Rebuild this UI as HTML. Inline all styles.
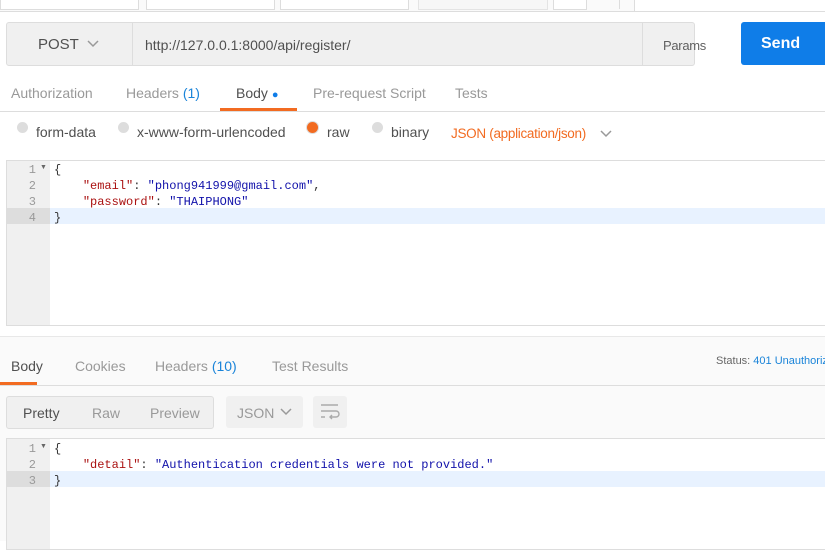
<!DOCTYPE html><html><head><style>
body{margin:0;width:825px;height:540px;overflow:hidden;background:#fff;font-family:"Liberation Sans",sans-serif;position:relative;color:#505050}
.a{position:absolute;white-space:nowrap}
.mono{font-family:"Liberation Mono",monospace;font-size:12px}
.tab{position:absolute;font-size:14px;color:#999;white-space:nowrap}
</style></head><body>
<div class="a" style="left:0;top:0;width:825px;height:11px;border-bottom:1px solid #ddd;background:#fafafa"></div>
<div class="a" style="left:0;top:0;width:137px;height:9px;border:1px solid #ddd;border-top:0;background:#fff"></div>
<div class="a" style="left:146px;top:0;width:127px;height:9px;border:1px solid #ddd;border-top:0;background:#fff"></div>
<div class="a" style="left:280px;top:0;width:127px;height:9px;border:1px solid #ddd;border-top:0;background:#fff"></div>
<div class="a" style="left:418px;top:0;width:128px;height:9px;border:1px solid #e4e4e4;border-top:0;background:#f7f7f7"></div>
<div class="a" style="left:553px;top:0;width:32px;height:9px;border:1px solid #ddd;border-top:0;background:#fff"></div>
<div class="a" style="left:589px;top:0;width:30px;height:9px;border-right:1px solid #ddd"></div>
<div class="a" style="left:634px;top:0;width:191px;height:11px;border-left:1px solid #ddd;background:#fff"></div>

<div class="a" style="left:6px;top:22px;width:687px;height:42px;border:1px solid #ddd;border-radius:3px;background:#f0f0f0"></div>
<div class="a" style="left:132px;top:23px;width:1px;height:42px;background:#ddd"></div>
<div class="a" style="left:642px;top:23px;width:1px;height:42px;background:#ddd"></div>
<div class="a" style="left:38px;top:36px;font-size:15px;color:#505050">POST</div>
<svg class="a" style="left:86px;top:39px" width="14" height="10"><path d="M2 2l5 5 5-5" stroke="#999" stroke-width="1.5" fill="none"/></svg>
<div class="a" style="left:145px;top:37px;font-size:14px;color:#505050">http://127.0.0.1:8000/api/register/</div>
<div class="a" style="left:663px;top:38px;font-size:13px;color:#606060;letter-spacing:-0.3px">Params</div>
<div class="a" style="left:741px;top:22px;width:90px;height:43px;background:#0f7de8;border-radius:3px"></div>
<div class="a" style="left:761px;top:35px;font-size:16px;color:#fff;font-weight:bold">Send</div>

<div class="tab" style="left:11px;top:85px">Authorization</div>
<div class="tab" style="left:126px;top:85px">Headers <span style="color:#1a84d9">(1)</span></div>
<div class="tab" style="left:236px;top:85px;color:#505050">Body <span style="color:#0f7de8;font-size:11px">●</span></div>
<div class="tab" style="left:313px;top:85px">Pre-request Script</div>
<div class="tab" style="left:455px;top:85px">Tests</div>
<div class="a" style="left:0;top:111px;width:825px;height:1px;background:#ddd"></div>
<div class="a" style="left:220px;top:108px;width:77px;height:3px;background:#f26b21"></div>

<div class="a" style="left:17px;top:122px;width:11px;height:11px;border-radius:50%;background:#ddd"></div>
<div class="tab" style="left:36px;top:124px;color:#505050">form-data</div>
<div class="a" style="left:118px;top:122px;width:11px;height:11px;border-radius:50%;background:#ddd"></div>
<div class="tab" style="left:137px;top:124px;color:#505050">x-www-form-urlencoded</div>
<div class="a" style="left:307px;top:122px;width:11px;height:11px;border-radius:50%;background:#f26b21;box-shadow:0 0 0 1px #ddd"></div>
<div class="tab" style="left:327px;top:124px;color:#505050">raw</div>
<div class="a" style="left:372px;top:122px;width:11px;height:11px;border-radius:50%;background:#ddd"></div>
<div class="tab" style="left:391px;top:124px;color:#505050">binary</div>
<div class="tab" style="left:451px;top:126px;color:#f26b21;font-size:13.5px;letter-spacing:-0.3px">JSON (application/json)</div>
<svg class="a" style="left:599px;top:129px" width="14" height="10"><path d="M2 2l5 5 5-5" stroke="#999" stroke-width="1.5" fill="none"/></svg>

<div class="a" style="left:6px;top:160px;width:825px;height:164px;border:1px solid #ddd;background:#fff"></div>
<div class="a" style="left:7px;top:161px;width:43px;height:164px;background:#f0f0f0"></div>
<div class="a" style="left:50px;top:208px;width:775px;height:16px;background:#e8f2ff"></div>
<div class="a" style="left:7px;top:208px;width:43px;height:16px;background:#ddd"></div>
<div class="a mono" style="left:0;top:162px;width:36px;text-align:right;line-height:16px;color:#999">1<br>2<br>3<br>4</div>
<div class="a" style="left:40px;top:164px;font-size:7px;color:#666">▼</div>
<div class="a mono" style="left:54px;top:162px;line-height:16px;color:#333;white-space:pre">{
    <span style="color:#a11">"email"</span>: <span style="color:#11a">"phong941999@gmail.com"</span>,
    <span style="color:#a11">"password"</span>: <span style="color:#11a">"THAIPHONG"</span>
}</div>

<div class="a" style="left:0;top:336px;width:825px;height:204px;background:#fafafa;border-top:1px solid #e8e8e8"></div>
<div class="tab" style="left:11px;top:358px;color:#505050">Body</div>
<div class="tab" style="left:75px;top:358px">Cookies</div>
<div class="tab" style="left:155px;top:358px">Headers <span style="color:#1a84d9">(10)</span></div>
<div class="tab" style="left:272px;top:358px">Test Results</div>
<div class="a" style="left:716px;top:355px;font-size:11px;color:#666">Status: <span style="color:#1a84d9">401 Unauthorized</span></div>
<div class="a" style="left:0;top:385px;width:825px;height:1px;background:#ddd"></div>
<div class="a" style="left:0;top:382px;width:37px;height:3px;background:#f26b21"></div>

<div class="a" style="left:6px;top:396px;width:206px;height:31px;border:1px solid #ddd;border-radius:3px;background:#f0f0f0"></div>
<div class="tab" style="left:23px;top:405px;color:#505050">Pretty</div>
<div class="tab" style="left:92px;top:405px">Raw</div>
<div class="tab" style="left:150px;top:405px">Preview</div>
<div class="a" style="left:226px;top:396px;width:77px;height:32px;border-radius:3px;background:#f0f0f0"></div>
<div class="tab" style="left:237px;top:405px">JSON</div>
<svg class="a" style="left:279px;top:407px" width="14" height="10"><path d="M2 2l5 5 5-5" stroke="#999" stroke-width="1.5" fill="none"/></svg>
<div class="a" style="left:313px;top:396px;width:34px;height:32px;border-radius:3px;background:#f0f0f0"></div>
<svg class="a" style="left:320px;top:403px" width="20" height="18"><path d="M1 2h17M1 8h15a3 3 0 0 1 0 6h-6M12 12l-2 2 2 2M1 14h4" stroke="#aaa" stroke-width="1.4" fill="none"/></svg>

<div class="a" style="left:6px;top:438px;width:825px;height:110px;border:1px solid #ddd;background:#fff"></div>
<div class="a" style="left:7px;top:439px;width:43px;height:110px;background:#f0f0f0"></div>
<div class="a" style="left:50px;top:471px;width:775px;height:16px;background:#e8f2ff"></div>
<div class="a" style="left:7px;top:471px;width:43px;height:16px;background:#ddd"></div>
<div class="a mono" style="left:0;top:441px;width:36px;text-align:right;line-height:16px;color:#999">1<br>2<br>3</div>
<div class="a" style="left:40px;top:443px;font-size:7px;color:#666">▼</div>
<div class="a mono" style="left:54px;top:441px;line-height:16px;color:#333;white-space:pre">{
    <span style="color:#a11">"detail"</span>: <span style="color:#11a">"Authentication credentials were not provided."</span>
}</div>
</body></html>
